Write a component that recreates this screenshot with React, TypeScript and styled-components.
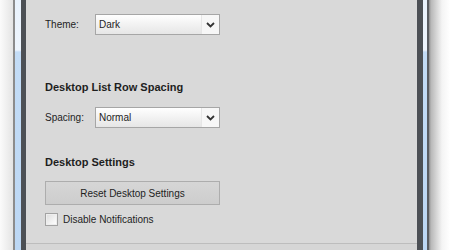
import React from 'react';
import styled, { createGlobalStyle } from 'styled-components';

const GlobalStyle = createGlobalStyle`
  html, body {
    margin: 0;
    padding: 0;
    background: #ffffff;
  }
  body {
    font-family: "Liberation Sans", Arial, sans-serif;
  }
`;

const Desktop = styled.div`
  width: 450px;
  height: 250px;
  overflow: hidden;
  display: flex;
  background: linear-gradient(to right, #fbfbfb 0, #e4e4e4 13px, transparent 13px),
    linear-gradient(to left, #ffffff 0, #f4f4f4 8px, #b8b8b8 19px, #8a8a8a 21px, transparent 21px);
  padding: 0 21px 0 13px;
  box-sizing: border-box;
`;

// window frame: outer line, blue glass, inner dark line
const Frame = styled.div`
  flex: 1;
  display: flex;
  border-left: 2px solid #8c8c8c;
  border-right: 2px solid #5a5d62;
  padding: 0 4px 0 6px;
  background: linear-gradient(to bottom, #e9f2fc 0, #eef5fd 50px, #c3dcf6 52px, #bcd7f4 100%);
`;

const Inner = styled.div`
  flex: 1;
  display: flex;
  border-left: 5px solid #4c5055;
  border-right: 6px solid #4c5055;
`;

const Content = styled.div`
  flex: 1;
  display: flex;
  flex-direction: column;
  background: #d9d9d9;
  color: #1e1e1e;
`;

const Panel = styled.div`
  flex: 1;
  display: flex;
  flex-direction: column;
  padding: 14px 0 0 19px;
`;

const Row = styled.div<{ $top?: number }>`
  display: flex;
  align-items: center;
  margin-top: ${(p) => p.$top ?? 0}px;
`;

const Label = styled.div`
  width: 50px;
  font-size: 10px;
`;

const Select = styled.div`
  width: 125px;
  height: 21px;
  box-sizing: border-box;
  display: flex;
  align-items: stretch;
  border: 1px solid #a6a6a6;
  background: linear-gradient(to bottom, #ffffff 0%, #f2f2f2 50%, #e6e6e6 100%);
  font-size: 10px;
`;

const SelectText = styled.div`
  flex: 1;
  display: flex;
  align-items: center;
  padding-left: 3px;
  border-right: 1px solid #e6e6e6;
`;

const SelectArrow = styled.div`
  width: 17px;
  display: flex;
  align-items: center;
  justify-content: center;
  background: #f7f7f7;
`;

const Heading = styled.div<{ $top: number }>`
  font-size: 11px;
  font-weight: bold;
  margin-top: ${(p) => p.$top}px;
  line-height: 13px;
`;

const Button = styled.div`
  width: 175px;
  height: 24px;
  box-sizing: border-box;
  margin-top: 12px;
  display: flex;
  align-items: center;
  justify-content: center;
  border: 1px solid #adadad;
  background: linear-gradient(to bottom, #d6d6d6, #cdcdcd);
  font-size: 10px;
`;

const Check = styled.div`
  width: 13px;
  height: 13px;
  box-sizing: border-box;
  border: 1px solid #a3a3a3;
  background: linear-gradient(135deg, #dcdcdc, #f6f6f6 70%, #ffffff);
  box-shadow: inset 0 0 0 1px #eeeeee;
  margin-right: 5px;
`;

const CheckLabel = styled.div`
  font-size: 10px;
`;

const Footer = styled.div`
  height: 6px;
  border-top: 1px solid #bdbdbd;
  background: #d6d6d6;
`;

const Chevron = () => (
  <svg width="9" height="6" viewBox="0 0 9 6">
    <path d="M1 1 L4.5 4.5 L8 1" fill="none" stroke="#333" strokeWidth="1.8" />
  </svg>
);

const App: React.FC = () => {
  return (
    <>
      <GlobalStyle />
      <Desktop>
        <Frame>
          <Inner>
            <Content>
              <Panel>
                <Row>
                  <Label>Theme:</Label>
                  <Select>
                    <SelectText>Dark</SelectText>
                    <SelectArrow><Chevron /></SelectArrow>
                  </Select>
                </Row>

                <Heading $top={46}>Desktop List Row Spacing</Heading>
                <Row $top={13}>
                  <Label>Spacing:</Label>
                  <Select>
                    <SelectText>Normal</SelectText>
                    <SelectArrow><Chevron /></SelectArrow>
                  </Select>
                </Row>

                <Heading $top={28}>Desktop Settings</Heading>
                <Button>Reset Desktop Settings</Button>
                <Row $top={8}>
                  <Check />
                  <CheckLabel>Disable Notifications</CheckLabel>
                </Row>
              </Panel>
              <Footer />
            </Content>
          </Inner>
        </Frame>
      </Desktop>
    </>
  );
};

export default App;
